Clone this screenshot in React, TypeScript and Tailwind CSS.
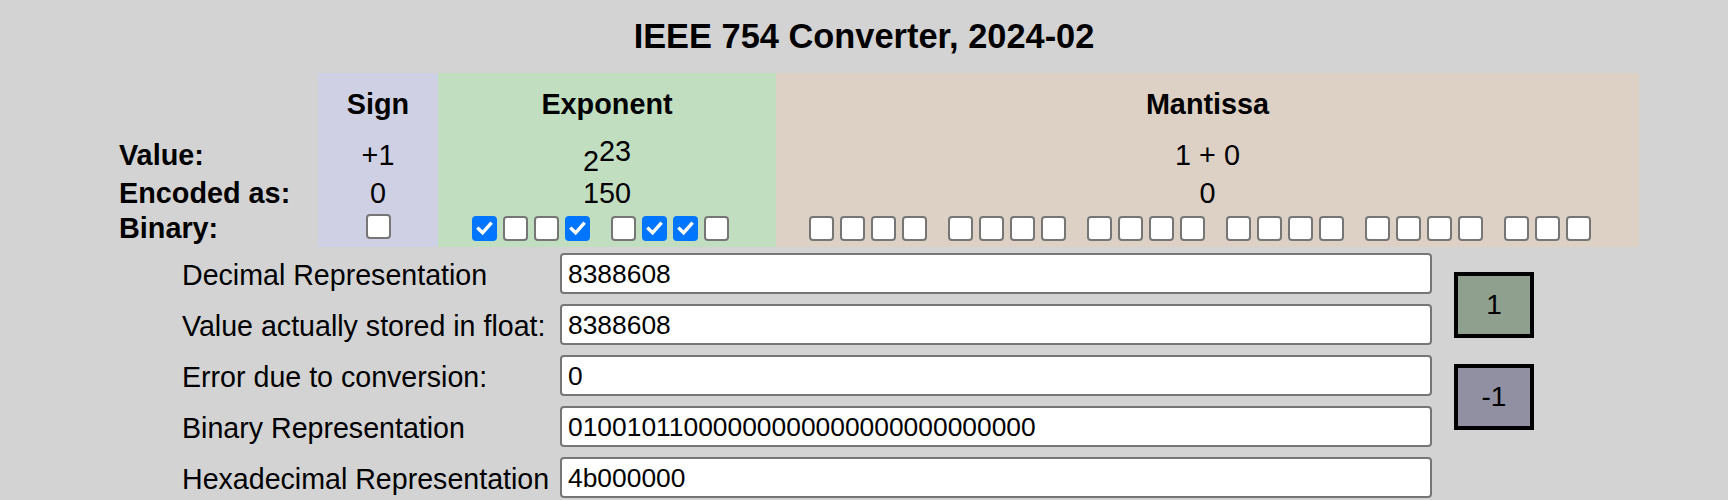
const expBits = [1, 0, 0, 1, 0, 1, 1, 0];
const mantBits = Array.from({ length: 23 }, () => 0);

const rows = [
  { label: "Decimal Representation", value: "8388608" },
  { label: "Value actually stored in float:", value: "8388608" },
  { label: "Error due to conversion:", value: "0" },
  { label: "Binary Representation", value: "01001011000000000000000000000000" },
  { label: "Hexadecimal Representation", value: "4b000000" },
];

function Box({ checked }: { checked: boolean }) {
  if (checked) {
    return (
      <span className="flex h-[25px] w-[25px] shrink-0 items-center justify-center rounded-[4px] bg-[#0075ff]">
        <svg width="19" height="19" viewBox="0 0 19 19" fill="none">
          <path d="M3.5 9.8 L7.6 13.8 L15.5 4.8" stroke="white" strokeWidth="3.4" strokeLinecap="square" />
        </svg>
      </span>
    );
  }
  return <span className="h-[25px] w-[25px] shrink-0 rounded-[4px] border-2 border-[#767676] bg-white" />;
}

function Bits({ bits }: { bits: number[] }) {
  const groups: number[][] = [];
  for (let i = 0; i < bits.length; i += 4) groups.push(bits.slice(i, i + 4));
  return (
    <div className="flex gap-[21px]">
      {groups.map((g, i) => (
        <div key={i} className="flex gap-[6px]">
          {g.map((b, j) => (
            <Box key={j} checked={b === 1} />
          ))}
        </div>
      ))}
    </div>
  );
}

export default function App() {
  return (
    <div className="min-h-screen bg-[#d3d3d3] text-black font-['Liberation_Sans',Arial,sans-serif]">
      {/* Title */}
      <h1 className="pt-[17px] text-center text-[34.4px] leading-[39px] font-bold">
        IEEE 754 Converter, 2024-02
      </h1>

      {/* Bit table */}
      <div className="mt-[17px] ml-[119px] grid grid-cols-[199px_120px_338px_863px] grid-rows-[55px_43px_35px_41px] text-[28.8px] leading-[32px]">
        {/* header */}
        <div />
        <div className="bg-[#d0d0e4] pt-[15px] text-center font-bold">Sign</div>
        <div className="bg-[#c1dec1] pt-[15px] text-center font-bold">Exponent</div>
        <div className="bg-[#ddd1c5] pt-[15px] text-center font-bold">Mantissa</div>

        {/* value */}
        <div className="pt-[11px] font-bold">Value:</div>
        <div className="bg-[#d0d0e4] pt-[11px] text-center">+1</div>
        <div className="bg-[#c1dec1] pt-[11px] text-center">
          <span className="relative top-[6px]">2</span>
          <span className="relative top-[-4px]">23</span>
        </div>
        <div className="bg-[#ddd1c5] pt-[11px] text-center">1 + 0</div>

        {/* encoded */}
        <div className="pt-[6px] font-bold">Encoded as:</div>
        <div className="bg-[#d0d0e4] pt-[6px] text-center">0</div>
        <div className="bg-[#c1dec1] pt-[6px] text-center">150</div>
        <div className="bg-[#ddd1c5] pt-[6px] text-center">0</div>

        {/* binary */}
        <div className="pt-[6px] font-bold">Binary:</div>
        <div className="bg-[#d0d0e4] pt-[8px] flex justify-center">
          <Box checked={false} />
        </div>
        <div className="bg-[#c1dec1] pt-[10px] flex justify-center pr-[14px]">
          <Bits bits={expBits} />
        </div>
        <div className="bg-[#ddd1c5] pt-[10px] flex justify-center pr-[16px]">
          <Bits bits={mantBits} />
        </div>
      </div>

      {/* Representations */}
      <div className="mt-[6px] ml-[182px] grid grid-cols-[378px_872px_102px] gap-y-[10px] auto-rows-[41px]">
        {rows.map((r, i) => (
          <div key={r.label} className="contents">
            <div className="pt-[2px] text-[28.6px] leading-[41px] whitespace-nowrap">{r.label}</div>
            <input
              type="text"
              value={r.value}
              readOnly
              className="h-[41px] w-full rounded-[4px] border-2 border-[#767676] bg-white px-[6px] pt-[2px] text-[26.4px] leading-[34px] outline-none"
            />
            {i === 0 && (
              <div className="row-span-5 flex flex-col gap-[26px] pt-[19px] pl-[22px]">
                <button className="h-[66px] w-[80px] border-4 border-black bg-[#8fa08f] text-[28px]">
                  1
                </button>
                <button className="h-[66px] w-[80px] border-4 border-black bg-[#9090a2] text-[28px]">
                  -1
                </button>
              </div>
            )}
          </div>
        ))}
      </div>
    </div>
  );
}
